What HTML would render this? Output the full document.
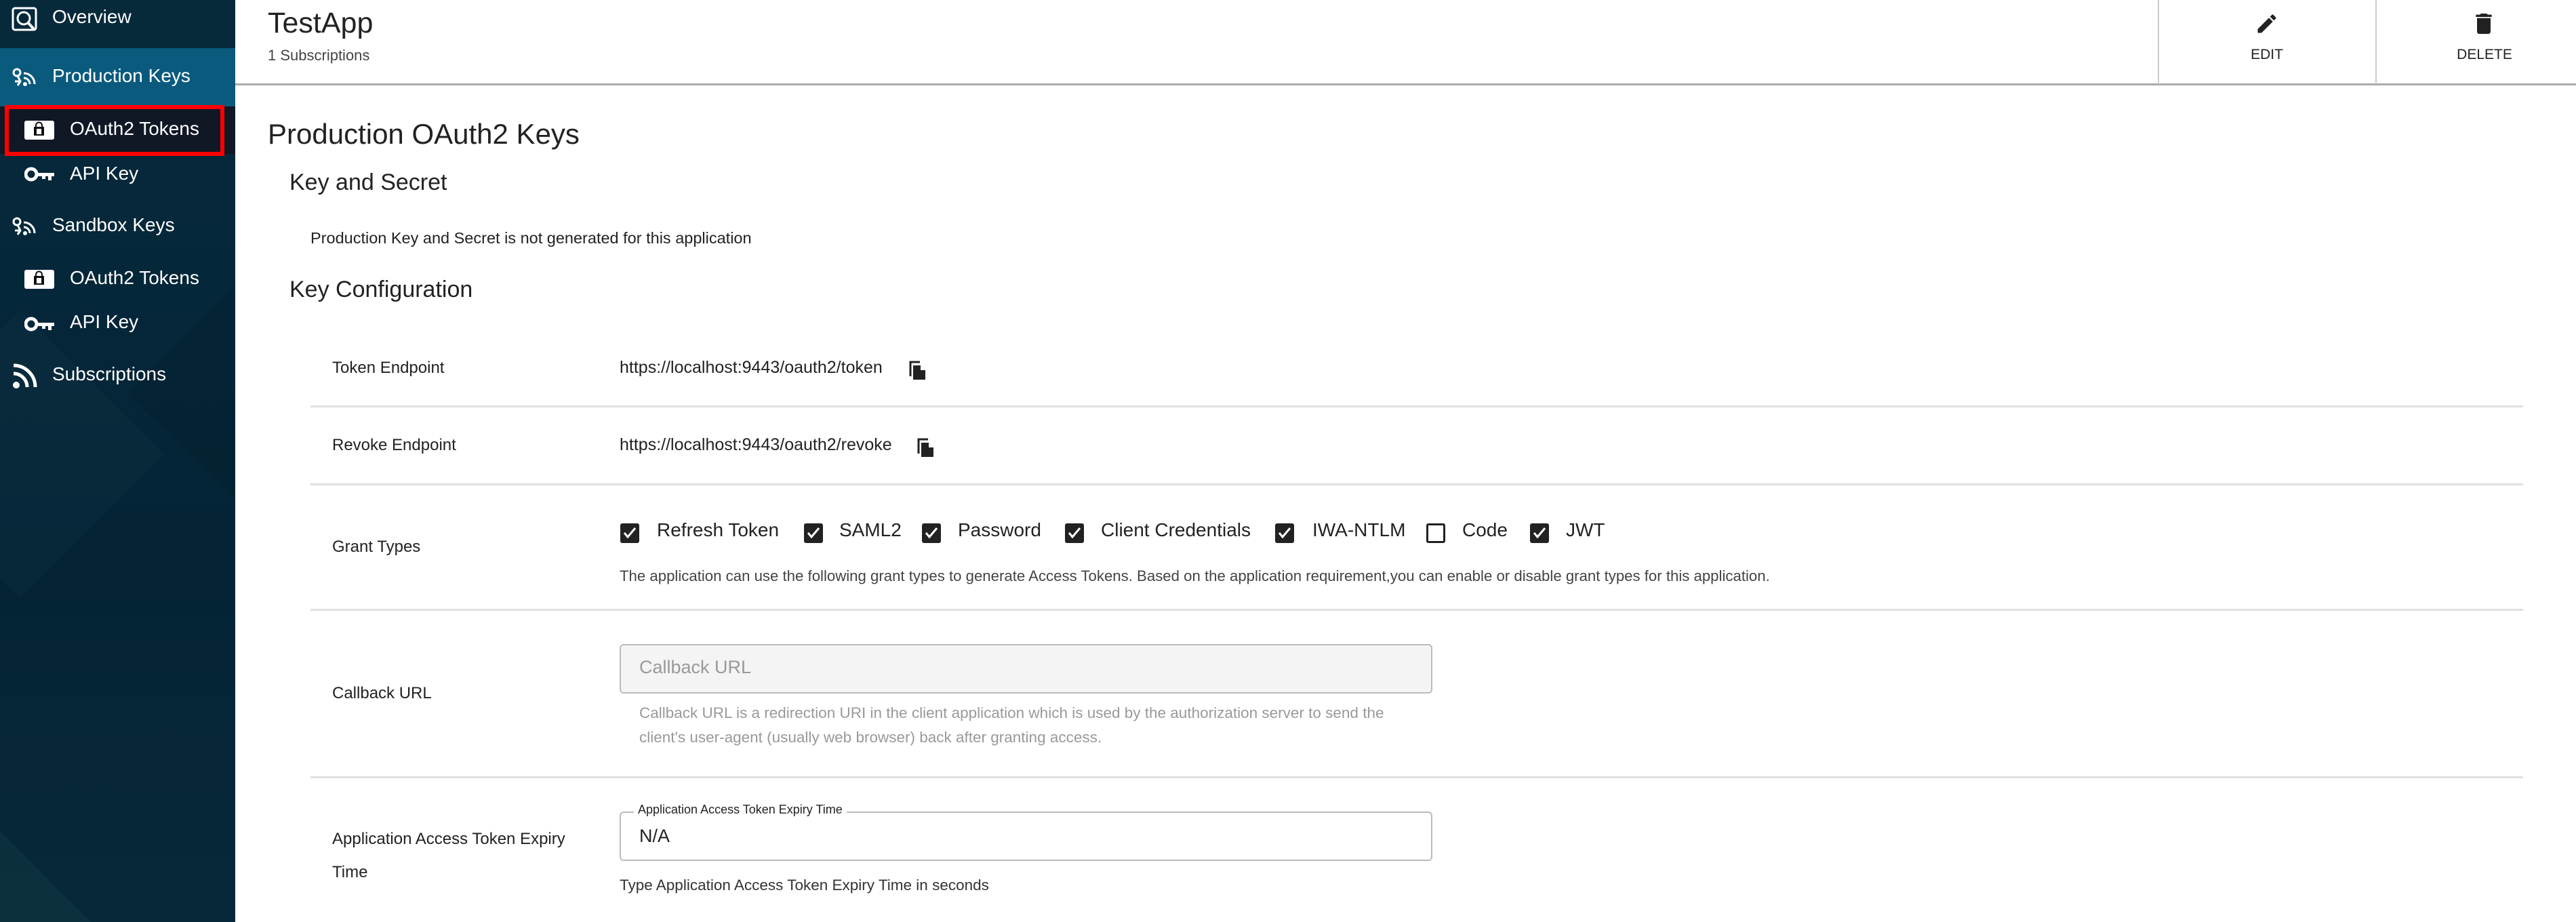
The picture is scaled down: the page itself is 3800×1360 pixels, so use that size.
<!DOCTYPE html>
<html style="overflow:hidden"><head><meta charset="utf-8"><style>
*{margin:0;padding:0;box-sizing:border-box}
html,body{width:3800px;height:1360px;overflow:hidden}
body{background:#fff;font-family:"Liberation Sans",sans-serif;color:#222;position:relative}
.a{position:absolute;white-space:nowrap}
#side{position:absolute;left:0;top:0;width:347px;height:1360px;background:linear-gradient(180deg,#072a3b 0%,#05273a 30%,#042436 60%,#072838 100%);overflow:hidden}
.st{position:absolute;color:#fff;font-size:28px;white-space:nowrap}
.lbl{position:absolute;left:490px;font-size:24px;color:#222;white-space:nowrap}
.val{position:absolute;left:914px;font-size:25px;color:#222;white-space:nowrap}
.hr{position:absolute;left:458px;width:3264px;height:3px;background:#e0e0e0}
.cb{position:absolute;width:28px;height:29px;border-radius:3px;background:#222}
.cb svg{position:absolute;left:4px;top:5px}
.cbt{position:absolute;top:766px;font-size:28px;color:#222;white-space:nowrap}
</style></head><body>
<div id="side">
  <div style="position:absolute;left:-120px;top:520px;width:300px;height:300px;background:rgba(30,70,85,.12);transform:rotate(45deg)"></div>
  <div style="position:absolute;left:250px;top:430px;width:300px;height:300px;background:rgba(0,0,0,.08);transform:rotate(45deg)"></div>
  <div style="position:absolute;left:-160px;top:1250px;width:260px;height:260px;background:rgba(40,80,90,.2);transform:rotate(45deg)"></div>
  <div style="position:absolute;left:0;top:71px;width:347px;height:86px;background:#0a5a7e"></div>
  <div style="position:absolute;left:0;top:157px;width:347px;height:70px;background:#101826"></div>
  <div style="position:absolute;left:7px;top:155px;width:324px;height:75px;border:6px solid #f00"></div>
  <svg class="a" style="left:17px;top:10px" width="40" height="38" viewBox="0 0 40 38"><rect x="2" y="2" width="34" height="32" rx="3" fill="none" stroke="#fff" stroke-width="3"/><circle cx="18" cy="17" r="9" fill="none" stroke="#fff" stroke-width="3"/><path d="M24 23l9 10" stroke="#fff" stroke-width="4"/></svg>
  <div class="st" style="left:77px;top:9px">Overview</div>
  <svg class="a" style="left:17px;top:100px" width="40" height="30" viewBox="0 0 40 30"><circle cx="8" cy="7" r="5" fill="none" stroke="#fff" stroke-width="3"/><path d="M9 12l4 8-4 6M11 20h-6" stroke="#fff" stroke-width="3" fill="none"/><path d="M18 8a16 16 0 0 1 16 16M18 15a9 9 0 0 1 9 9" stroke="#fff" stroke-width="3" fill="none"/><circle cx="20" cy="24" r="3" fill="#fff"/></svg>
  <div class="st" style="left:77px;top:96px">Production Keys</div>
  <svg class="a" style="left:36px;top:178px" width="44" height="28" viewBox="0 0 44 28"><rect x="0" y="0" width="44" height="28" rx="3" fill="#fff"/><rect x="14" y="9" width="15" height="13" fill="#111"/><rect x="18" y="12" width="7" height="8" fill="#fff"/><path d="M17 10v-3a4.5 4.5 0 0 1 9 0v3" stroke="#111" stroke-width="2" fill="none"/></svg>
  <div class="st" style="left:103px;top:174px">OAuth2 Tokens</div>
  <svg class="a" style="left:36px;top:245px" width="44" height="24" viewBox="0 0 44 24"><circle cx="10" cy="12" r="8" fill="none" stroke="#fff" stroke-width="5"/><path d="M18 10h26v5h-4v6h-5v-6h-4v4h-5v-4h-8z" fill="#fff"/></svg>
  <div class="st" style="left:103px;top:240px">API Key</div>
  <svg class="a" style="left:17px;top:320px" width="40" height="30" viewBox="0 0 40 30"><circle cx="8" cy="7" r="5" fill="none" stroke="#fff" stroke-width="3"/><path d="M9 12l4 8-4 6M11 20h-6" stroke="#fff" stroke-width="3" fill="none"/><path d="M18 8a16 16 0 0 1 16 16M18 15a9 9 0 0 1 9 9" stroke="#fff" stroke-width="3" fill="none"/><circle cx="20" cy="24" r="3" fill="#fff"/></svg>
  <div class="st" style="left:77px;top:316px">Sandbox Keys</div>
  <svg class="a" style="left:36px;top:398px" width="44" height="28" viewBox="0 0 44 28"><rect x="0" y="0" width="44" height="28" rx="3" fill="#fff"/><rect x="14" y="9" width="15" height="13" fill="#111"/><rect x="18" y="12" width="7" height="8" fill="#fff"/><path d="M17 10v-3a4.5 4.5 0 0 1 9 0v3" stroke="#111" stroke-width="2" fill="none"/></svg>
  <div class="st" style="left:103px;top:394px">OAuth2 Tokens</div>
  <svg class="a" style="left:36px;top:466px" width="44" height="24" viewBox="0 0 44 24"><circle cx="10" cy="12" r="8" fill="none" stroke="#fff" stroke-width="5"/><path d="M18 10h26v5h-4v6h-5v-6h-4v4h-5v-4h-8z" fill="#fff"/></svg>
  <div class="st" style="left:103px;top:459px">API Key</div>
  <svg class="a" style="left:18px;top:535px" width="38" height="40" viewBox="0 0 38 40"><circle cx="6" cy="33" r="5" fill="#fff"/><path d="M2 16a20 20 0 0 1 20 20M2 4a32 32 0 0 1 32 32" stroke="#fff" stroke-width="5" fill="none"/></svg>
  <div class="st" style="left:77px;top:536px">Subscriptions</div>
</div>

<div class="a" style="left:395px;top:10px;font-size:43px;color:#222">TestApp</div>
<div class="a" style="left:395px;top:69px;font-size:22px;color:#444">1 Subscriptions</div>
<div class="a" style="left:347px;top:123px;width:3453px;height:3px;background:#aaa"></div>
<div class="a" style="left:3183px;top:0;width:2px;height:124px;background:#ccc"></div>
<div class="a" style="left:3504px;top:0;width:2px;height:124px;background:#ccc"></div>
<svg class="a" style="left:3326px;top:16px" width="36" height="38" viewBox="0 0 24 24"><path d="M3 17.25V21h3.75L17.81 9.94l-3.75-3.75L3 17.25zM20.71 7.04a1 1 0 0 0 0-1.41l-2.34-2.34a1 1 0 0 0-1.41 0l-1.83 1.83 3.75 3.75 1.83-1.83z" fill="#222"/></svg>
<div class="a" style="left:3344px;top:69px;transform:translateX(-50%);font-size:21px">EDIT</div>
<svg class="a" style="left:3644px;top:14px" width="40" height="42" viewBox="0 0 24 24"><path d="M6 19c0 1.1.9 2 2 2h8c1.1 0 2-.9 2-2V7H6v12zM19 4h-3.5l-1-1h-5l-1 1H5v2h14V4z" fill="#222"/></svg>
<div class="a" style="left:3665px;top:69px;transform:translateX(-50%);font-size:21px">DELETE</div>

<div class="a" style="left:395px;top:174px;font-size:42px">Production OAuth2 Keys</div>
<div class="a" style="left:427px;top:250px;font-size:34px">Key and Secret</div>
<div class="a" style="left:458px;top:338px;font-size:23.5px">Production Key and Secret is not generated for this application</div>
<div class="a" style="left:427px;top:408px;font-size:34px">Key Configuration</div>

<div class="lbl" style="top:529px">Token Endpoint</div>
<div class="val" style="top:528px">https://localhost:9443/oauth2/token</div>
<svg class="a" style="left:1341px;top:531px" width="26" height="30" viewBox="0 0 26 30"><path d="M2 24V3h14" stroke="#222" stroke-width="3" fill="none"/><path d="M6 8h11l7 7v14H6z" fill="#222"/><path d="M17 8v7h7" fill="#fff"/></svg>
<div class="hr" style="top:598px"></div>
<div class="lbl" style="top:643px">Revoke Endpoint</div>
<div class="val" style="top:642px">https://localhost:9443/oauth2/revoke</div>
<svg class="a" style="left:1353px;top:645px" width="26" height="30" viewBox="0 0 26 30"><path d="M2 24V3h14" stroke="#222" stroke-width="3" fill="none"/><path d="M6 8h11l7 7v14H6z" fill="#222"/><path d="M17 8v7h7" fill="#fff"/></svg>
<div class="hr" style="top:713px"></div>

<div class="lbl" style="top:793px">Grant Types</div>
<div class="cb" style="left:915px;top:772px"><svg width="20" height="18" viewBox="0 0 20 18"><path d="M2 9l5 6L18 2" stroke="#fff" stroke-width="3" fill="none"/></svg></div>
<div class="cbt" style="left:969px">Refresh Token</div>
<div class="cb" style="left:1186px;top:772px"><svg width="20" height="18" viewBox="0 0 20 18"><path d="M2 9l5 6L18 2" stroke="#fff" stroke-width="3" fill="none"/></svg></div>
<div class="cbt" style="left:1238px">SAML2</div>
<div class="cb" style="left:1360px;top:772px"><svg width="20" height="18" viewBox="0 0 20 18"><path d="M2 9l5 6L18 2" stroke="#fff" stroke-width="3" fill="none"/></svg></div>
<div class="cbt" style="left:1413px">Password</div>
<div class="cb" style="left:1571px;top:772px"><svg width="20" height="18" viewBox="0 0 20 18"><path d="M2 9l5 6L18 2" stroke="#fff" stroke-width="3" fill="none"/></svg></div>
<div class="cbt" style="left:1624px">Client Credentials</div>
<div class="cb" style="left:1881px;top:772px"><svg width="20" height="18" viewBox="0 0 20 18"><path d="M2 9l5 6L18 2" stroke="#fff" stroke-width="3" fill="none"/></svg></div>
<div class="cbt" style="left:1936px">IWA-NTLM</div>
<div class="cb" style="left:2104px;top:772px;background:#fff;border:3px solid #222"></div>
<div class="cbt" style="left:2157px">Code</div>
<div class="cb" style="left:2257px;top:772px"><svg width="20" height="18" viewBox="0 0 20 18"><path d="M2 9l5 6L18 2" stroke="#fff" stroke-width="3" fill="none"/></svg></div>
<div class="cbt" style="left:2310px">JWT</div>
<div class="a" style="left:914px;top:837px;font-size:22.2px;color:#444">The application can use the following grant types to generate Access Tokens. Based on the application requirement,you can enable or disable grant types for this application.</div>
<div class="hr" style="top:898px"></div>

<div class="lbl" style="top:1009px">Callback URL</div>
<div class="a" style="left:914px;top:950px;width:1199px;height:73px;background:#f4f4f4;border:2px solid #bbb;border-radius:6px"></div>
<div class="a" style="left:943px;top:969px;font-size:27px;color:#999">Callback URL</div>
<div class="a" style="left:943px;top:1039px;font-size:22.5px;color:#999">Callback URL is a redirection URI in the client application which is used by the authorization server to send the</div>
<div class="a" style="left:943px;top:1075px;font-size:22.5px;color:#999">client's user-agent (usually web browser) back after granting access.</div>
<div class="hr" style="top:1145px"></div>

<div class="lbl" style="top:1224px">Application Access Token Expiry</div>
<div class="lbl" style="top:1273px">Time</div>
<div class="a" style="left:914px;top:1197px;width:1199px;height:73px;border:2px solid #bbb;border-radius:6px"></div>
<div class="a" style="left:935px;top:1184px;padding:0 6px;background:#fff;font-size:18px;color:#222">Application Access Token Expiry Time</div>
<div class="a" style="left:943px;top:1218px;font-size:27px;color:#222">N/A</div>
<div class="a" style="left:914px;top:1293px;font-size:22.5px;color:#333">Type Application Access Token Expiry Time in seconds</div>
</body></html>
